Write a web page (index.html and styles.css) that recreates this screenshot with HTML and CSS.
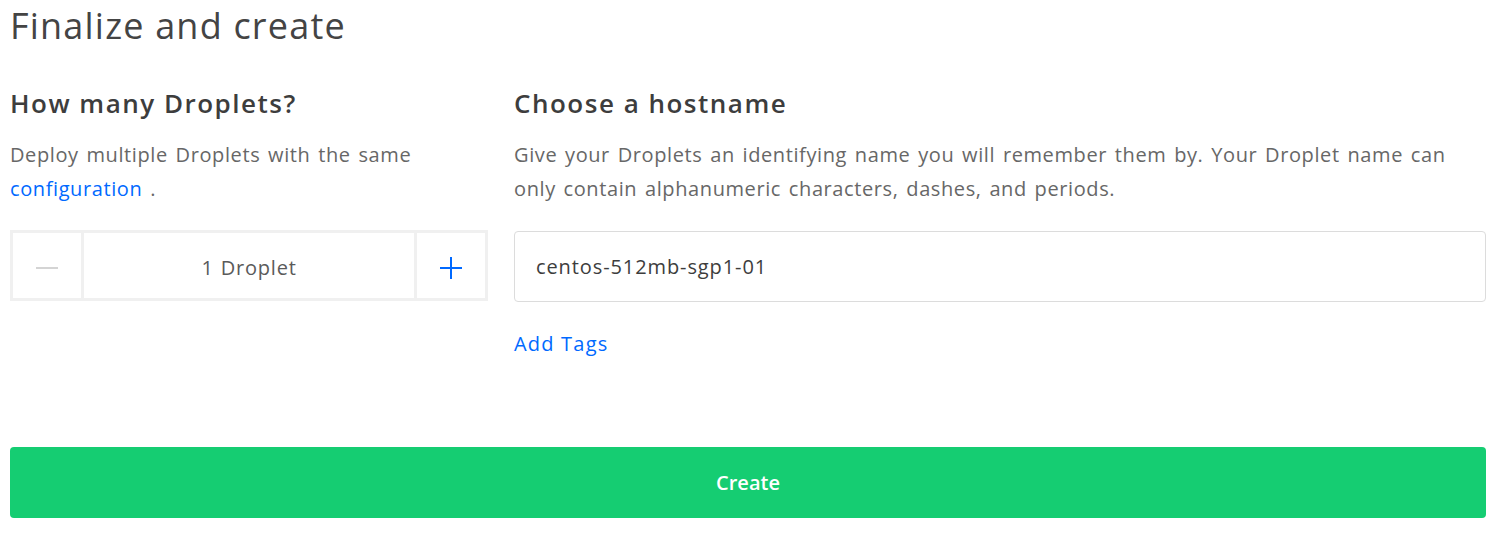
FILE: index.html
```html
<!DOCTYPE html>
<html lang="en">
<head>
    <meta charset="UTF-8">
    <meta name="viewport" content="width=device-width, initial-scale=1.0">
    <title>Finalize and create</title>
    <link rel="stylesheet" href="styles.css">
</head>
<body>
    <div class="page">
        <h1 class="page-title">Finalize and create</h1>
        <div class="options">
            <div class="option option-count">
                <h2>How many Droplets?</h2>
                <p>Deploy multiple Droplets with the same <a href="#">configuration</a> .</p>
                <div class="stepper">
                    <button class="stepper-btn stepper-minus" disabled>
                        <svg width="22" height="22" viewBox="0 0 22 22"><path d="M0 11h22" stroke="currentColor" stroke-width="2"/></svg>
                    </button>
                    <div class="stepper-value"><span>1</span> Droplet</div>
                    <button class="stepper-btn stepper-plus">
                        <svg width="22" height="22" viewBox="0 0 22 22"><path d="M0 11h22M11 0v22" stroke="currentColor" stroke-width="2"/></svg>
                    </button>
                </div>
            </div>
            <div class="option option-name">
                <h2>Choose a hostname</h2>
                <p>Give your Droplets an identifying name you will remember them by. Your Droplet name can only contain alphanumeric characters, dashes, and periods.</p>
                <input class="hostname-input" type="text" value="centos-512mb-sgp1-01">
                <a href="#" class="add-tags">Add Tags</a>
            </div>
        </div>
        <button class="create-button">Create</button>
    </div>
</body>
</html>
```

FILE: styles.css
```css
body {
    margin: 0;
    font-family: 'Open Sans', 'Liberation Sans', sans-serif;
    color: #444;
    background: #fff;
}
.page {
    padding: 0 23px 0 10px;
}
.page-title {
    font-size: 36px;
    font-weight: 400;
    letter-spacing: 1.2px;
    color: #444;
    margin: 0;
    padding-top: 4px;
    line-height: 44px;
}
.options {
    display: flex;
    gap: 26px;
    margin-top: 38px;
}
.option h2 {
    font-size: 26px;
    font-weight: 600;
    letter-spacing: 1.5px;
    color: #3d3d3d;
    margin: 0 0 18px;
    line-height: 34px;
}
.option p {
    font-size: 20px;
    line-height: 34px;
    letter-spacing: 0.6px;
    word-spacing: 2px;
    color: #676767;
    margin: 0 0 25px;
}
.option a {
    color: #0069ff;
    text-decoration: none;
}
.option-count {
    width: 478px;
    flex-shrink: 0;
}
.option-name {
    flex: 1;
}
.stepper {
    display: flex;
    height: 71px;
    margin-top: -1px;
    border: 3px solid #f0f0f0;
    box-sizing: border-box;
}
.stepper-btn {
    width: 71px;
    background: #fff;
    border: none;
    padding: 4px 0 0;
    display: flex;
    align-items: center;
    justify-content: center;
    cursor: pointer;
}
.stepper-minus {
    color: #d4d4d4;
    border-right: 3px solid #f0f0f0;
}
.stepper-plus {
    color: #0069ff;
    border-left: 3px solid #f0f0f0;
}
.stepper-value {
    flex: 1;
    display: flex;
    align-items: center;
    justify-content: center;
    padding-top: 3px;
    font-size: 20px;
    letter-spacing: 0.8px;
    color: #5a5a5a;
}
.stepper-value span {
    margin-right: 7px;
}
.hostname-input {
    display: block;
    width: 100%;
    height: 71px;
    box-sizing: border-box;
    border: 1px solid #dcdcdc;
    border-radius: 4px;
    padding: 0 21px;
    font-family: inherit;
    font-size: 20px;
    letter-spacing: 0.9px;
    color: #3d3d3d;
    margin-top: 0;
}
.add-tags {
    display: inline-block;
    font-size: 20px;
    letter-spacing: 1.2px;
    margin-top: 28px;
}
.create-button {
    display: block;
    width: 100%;
    height: 71px;
    margin-top: 90px;
    background: #15cd72;
    color: #fff;
    border: none;
    border-radius: 4px;
    font-family: inherit;
    font-size: 20px;
    font-weight: 600;
    cursor: pointer;
}
```
